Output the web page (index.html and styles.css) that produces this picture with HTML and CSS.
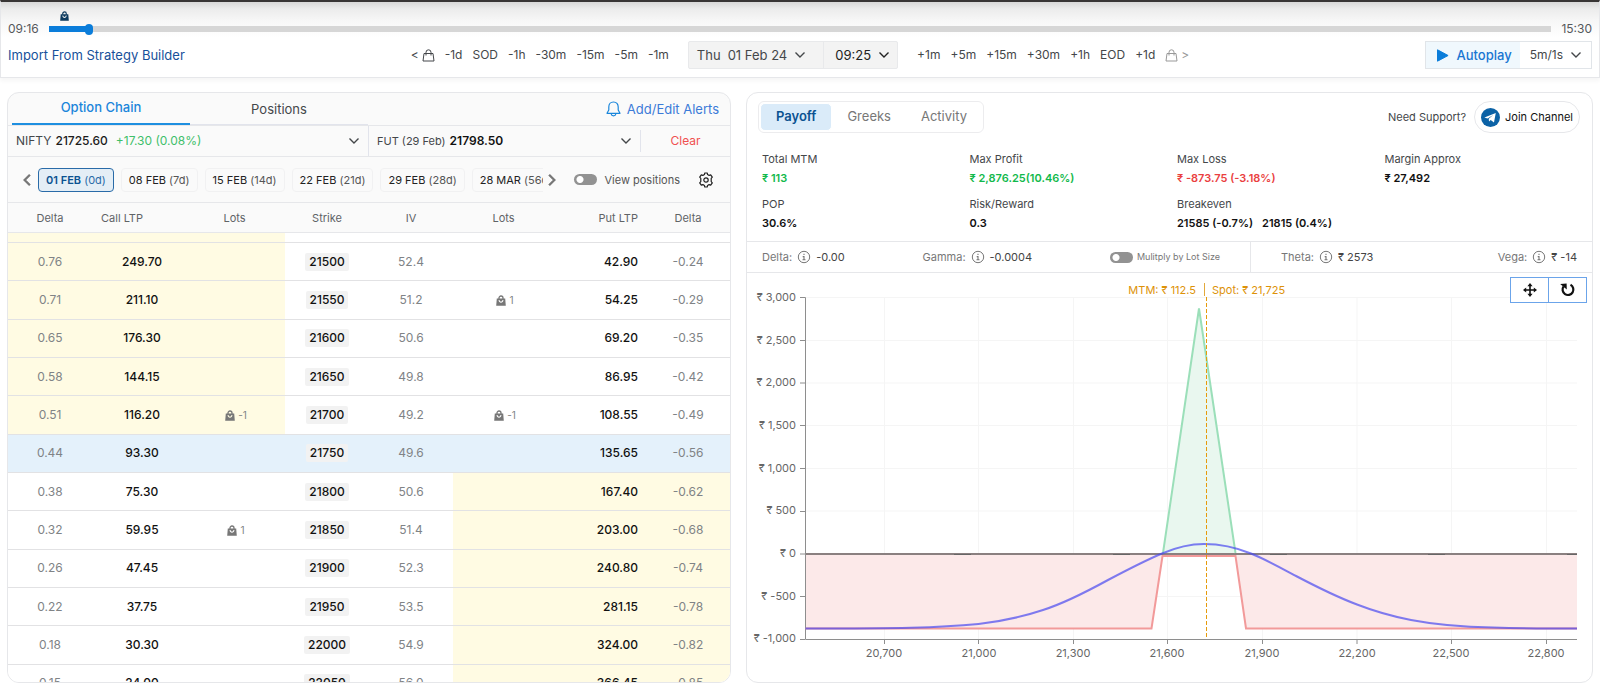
FILE: index.html
```html
<!DOCTYPE html>
<html lang="en">
<head>
<meta charset="utf-8">
<title>Option Simulator</title>
<link rel="stylesheet" href="styles.css">
</head>
<body>
<svg class="sprite" aria-hidden="true">
  <symbol id="bag" viewBox="0 0 10 11"><path d="M3 4V3a2 2 0 0 1 4 0v1" fill="none" stroke="currentColor" stroke-width="1.3"/><path fill-rule="evenodd" fill="currentColor" d="M.8 3.6h8.4l.6 7.2H.2zM2.6 5c0 3.6 4.8 3.6 4.8 0h-1c0 2-2.800 2-2.800 0z"/></symbol>
  <symbol id="bag-line" viewBox="0 0 13 13"><path d="M2 4.500h9l1 7.500H1zM4 6.500V3.300a2.500 2.500 0 0 1 5 0v3.200" fill="none" stroke="currentColor" stroke-linejoin="round"/></symbol>
  <symbol id="chevron" viewBox="0 0 12 12"><path d="M1.500 3.500 6 8l4.500-4.500" fill="none" stroke="currentColor" stroke-width="1.400"/></symbol>
  <symbol id="info" viewBox="0 0 14 14"><circle cx="7" cy="7" r="5.700" fill="none" stroke="currentColor"/><path d="M7 3.800v1.300M5.700 6.600H7v3M5.500 9.800h3" fill="none" stroke="currentColor" stroke-width="1.100"/></symbol>
</svg>

<header class="topbar">
  <div class="timeline">
    <span>09:16</span>
    <div class="timeline-track">
      <svg class="timeline-mark"><use href="#bag"/></svg>
      <input class="timeline-range" type="range" min="0" max="374" value="9" aria-label="Time of day">
    </div>
    <span>15:30</span>
  </div>
  <div class="controls">
    <a class="import" href="#">Import From Strategy Builder</a>
    <div class="stepper">
      <button class="step step-icon" aria-label="Previous trade">&lt;<svg class="bag-line"><use href="#bag-line"/></svg></button>
      <button class="step">-1d</button><button class="step">SOD</button><button class="step">-1h</button><button class="step">-30m</button><button class="step">-15m</button><button class="step">-5m</button><button class="step">-1m</button>
      <div class="datetime">
        <button class="pick pick-date"><span>Thu</span> 01 Feb 24<svg class="chev"><use href="#chevron"/></svg></button>
        <button class="pick pick-time">09:25<svg class="chev"><use href="#chevron"/></svg></button>
      </div>
      <button class="step">+1m</button><button class="step">+5m</button><button class="step">+15m</button><button class="step">+30m</button><button class="step">+1h</button><button class="step">EOD</button><button class="step">+1d</button>
      <button class="step step-icon step-off" aria-label="Next trade"><svg class="bag-line"><use href="#bag-line"/></svg>&gt;</button>
    </div>
    <div class="playback">
      <button class="autoplay"><svg class="play" viewBox="0 0 12 13"><path d="M1 .8 11.600 6.500 1 12.200z" fill="currentColor" stroke="currentColor" stroke-linejoin="round"/></svg>Autoplay</button>
      <button class="speed">5m/1s<svg class="chev"><use href="#chevron"/></svg></button>
    </div>
  </div>
</header>

<main class="panels">
  <section class="panel chain">
    <div class="chain-tabs">
      <button class="tab tab-on">Option Chain</button>
      <button class="tab">Positions</button>
      <a class="alerts" href="#"><svg class="bell" viewBox="0 0 15 16"><path d="M7.500 1c-3 0-4.700 2.200-4.700 5v3L1 12.300h13L12.200 9V6c0-2.800-1.700-5-4.700-5zM5.200 13c.3 2.600 4.300 2.600 4.600 0" fill="none" stroke="currentColor" stroke-width="1.200" stroke-linejoin="round"/></svg>Add/Edit Alerts</a>
    </div>
    <div class="quotes">
      <button class="quote quote-spot">NIFTY <b>21725.60</b> <span class="up">+17.30 (0.08%)</span><svg class="chev"><use href="#chevron"/></svg></button>
      <button class="quote quote-fut"><span>FUT (29 Feb)</span> <strong>21798.50</strong><svg class="chev"><use href="#chevron"/></svg></button>
      <button class="clear">Clear</button>
    </div>
    <div class="expiries">
      <button class="arrow" aria-label="Earlier expiries"><svg viewBox="0 0 10 12"><path d="M7.500 1.500 3 6l4.500 4.500" fill="none" stroke="currentColor" stroke-width="2"/></svg></button>
      <div class="chips">
        <button class="chip chip-on"><b>01 FEB</b> (0d)</button>
        <button class="chip"><b>08 FEB</b> (7d)</button>
        <button class="chip"><b>15 FEB</b> (14d)</button>
        <button class="chip"><b>22 FEB</b> (21d)</button>
        <button class="chip"><b>29 FEB</b> (28d)</button>
        <button class="chip"><b>28 MAR</b> (56d)</button>
      </div>
      <button class="arrow" aria-label="Later expiries"><svg viewBox="0 0 10 12"><path d="M2.500 1.500 7 6l-4.500 4.500" fill="none" stroke="currentColor" stroke-width="2"/></svg></button>
      <label class="switch"><input type="checkbox">View positions</label>
      <button class="gear" aria-label="Settings"><svg viewBox="0 0 16 16"><path d="M6.400 2.500 6.800 1h2.400l.4 1.500 1.500.9 1.600-.5 1.600 2.300-1.100 1.200v3.200l1.100 1.200-1.600 2.300-1.600-.5-1.500.9-.4 1.500H6.800l-.4-1.500-1.500-.9-1.600.5-1.600-2.300 1.100-1.200V6.400L1.700 5.200l1.600-2.300 1.600.5z" fill="none" stroke="currentColor" stroke-width="1.200" stroke-linejoin="round"/><circle cx="8" cy="8" r="2.200" fill="none" stroke="currentColor" stroke-width="1.200"/></svg></button>
    </div>
    <div class="strikes">
      <table class="strike-table">
        <colgroup><col class="w-delta"><col class="w-call"><col class="w-lots"><col class="w-mid"><col class="w-mid"><col class="w-lots"><col class="w-put"><col class="w-delta"></colgroup>
        <thead><tr><th>Delta</th><th class="call-head">Call LTP</th><th>Lots</th><th>Strike</th><th>IV</th><th>Lots</th><th class="put">Put LTP</th><th>Delta</th></tr></thead>
        <tbody>
          <tr class="itm-call peek"><td></td><td></td><td></td><td></td><td></td><td></td><td></td><td></td></tr>
          <tr class="itm-call"><td>0.76</td><td class="call">249.70</td><td></td><td><span class="strike">21500</span></td><td>52.4</td><td></td><td class="put">42.90</td><td>-0.24</td></tr>
          <tr class="itm-call"><td>0.71</td><td class="call">211.10</td><td></td><td><span class="strike">21550</span></td><td>51.2</td><td><span class="lots"><svg><use href="#bag"/></svg>1</span></td><td class="put">54.25</td><td>-0.29</td></tr>
          <tr class="itm-call"><td>0.65</td><td class="call">176.30</td><td></td><td><span class="strike">21600</span></td><td>50.6</td><td></td><td class="put">69.20</td><td>-0.35</td></tr>
          <tr class="itm-call"><td>0.58</td><td class="call">144.15</td><td></td><td><span class="strike">21650</span></td><td>49.8</td><td></td><td class="put">86.95</td><td>-0.42</td></tr>
          <tr class="itm-call"><td>0.51</td><td class="call">116.20</td><td><span class="lots"><svg><use href="#bag"/></svg>-1</span></td><td><span class="strike">21700</span></td><td>49.2</td><td><span class="lots"><svg><use href="#bag"/></svg>-1</span></td><td class="put">108.55</td><td>-0.49</td></tr>
          <tr class="atm"><td>0.44</td><td class="call">93.30</td><td></td><td><span class="strike">21750</span></td><td>49.6</td><td></td><td class="put">135.65</td><td>-0.56</td></tr>
          <tr class="itm-put"><td>0.38</td><td class="call">75.30</td><td></td><td><span class="strike">21800</span></td><td>50.6</td><td></td><td class="put">167.40</td><td>-0.62</td></tr>
          <tr class="itm-put"><td>0.32</td><td class="call">59.95</td><td><span class="lots"><svg><use href="#bag"/></svg>1</span></td><td><span class="strike">21850</span></td><td>51.4</td><td></td><td class="put">203.00</td><td>-0.68</td></tr>
          <tr class="itm-put"><td>0.26</td><td class="call">47.45</td><td></td><td><span class="strike">21900</span></td><td>52.3</td><td></td><td class="put">240.80</td><td>-0.74</td></tr>
          <tr class="itm-put"><td>0.22</td><td class="call">37.75</td><td></td><td><span class="strike">21950</span></td><td>53.5</td><td></td><td class="put">281.15</td><td>-0.78</td></tr>
          <tr class="itm-put"><td>0.18</td><td class="call">30.30</td><td></td><td><span class="strike">22000</span></td><td>54.9</td><td></td><td class="put">324.00</td><td>-0.82</td></tr>
          <tr class="itm-put"><td>0.15</td><td class="call">24.00</td><td></td><td><span class="strike">22050</span></td><td>56.0</td><td></td><td class="put">366.45</td><td>-0.85</td></tr>
        </tbody>
      </table>
    </div>
  </section>

  <section class="panel payoff">
    <div class="payoff-head">
      <div class="segments"><button class="segment segment-on">Payoff</button><button class="segment">Greeks</button><button class="segment">Activity</button></div>
      <div class="support">Need Support?
        <a class="join" href="#"><svg class="telegram" viewBox="0 0 18 18"><circle cx="9" cy="9" r="9" fill="#0b62a6"/><path d="M3.200 8.900 14 4.700 12.300 13.700 9.200 11.400 7.600 12.900 7.300 10.200 11.600 6.600 6.200 9.900z" fill="#fff"/></svg>Join Channel</a>
      </div>
    </div>
    <dl class="metrics">
      <div><dt>Total MTM</dt><dd class="gain">₹ 113</dd></div>
      <div><dt>Max Profit</dt><dd class="gain">₹ 2,876.25(10.46%)</dd></div>
      <div><dt>Max Loss</dt><dd class="loss">₹ -873.75 (-3.18%)</dd></div>
      <div><dt>Margin Approx</dt><dd>₹ 27,492</dd></div>
      <div><dt>POP</dt><dd>30.6%</dd></div>
      <div><dt>Risk/Reward</dt><dd>0.3</dd></div>
      <div><dt>Breakeven</dt><dd class="pair"><span>21585 (-0.7%)</span><span>21815 (0.4%)</span></dd></div>
    </dl>
    <div class="greeks">
      <div class="greeks-unit">
        <span class="greek">Delta: <svg class="info"><use href="#info"/></svg><span>-0.00</span></span>
        <span class="greek">Gamma: <svg class="info"><use href="#info"/></svg><span>-0.0004</span></span>
        <label class="switch switch-small"><input type="checkbox">Mulitply by Lot Size</label>
      </div>
      <div class="greeks-total">
        <span class="greek">Theta: <svg class="info"><use href="#info"/></svg><span>₹ 2573</span></span>
        <span class="greek">Vega: <svg class="info"><use href="#info"/></svg><span>₹ -14</span></span>
      </div>
    </div>
    <div class="chart">
      <svg class="plot" viewBox="0 0 845 402" role="img" aria-label="Payoff at expiry and today">
        <path class="grid" d="M58.500 24.500H830M58.500 67.500H830M58.500 110H830M58.500 152.500H830M58.500 195.500H830M58.500 238H830M58.500 323.500H830M137.500 24.500V366M231.500 24.500V366M326.500 24.500V366M420.500 24.500V366M515.500 24.500V366M610 24.500V366M704.500 24.500V366M799.500 24.500V366"/>
        <path class="loss-area" d="M58.500 281H415.500L404.500 355.500H58.500zM830 281H488.500L499 355.500H830z"/>
        <path class="gain-area" d="M416 281 452 35.500 488.500 281z"/>
        <path class="zero" d="M58.500 281H830"/>
        <path class="zero-marks" d="M207 281.500h17M366 281.500h17M523 281.500h17M681 281.500h17M820 281.500h10"/>
        <path class="axis" d="M53 24.500h5.500V366.500M58.500 366.500H830"/>
        <path class="ticks" d="M53 67.500h5M53 110h5M53 152.500h5M53 195.500h5M53 238.500h5M53 281h5M53 323.500h5M53 366.500h5M137.500 367v4M231.500 367v4M326.500 367v4M420.500 367v4M515.500 367v4M610 367v4M704.500 367v4M799.500 367v4"/>
        <path class="loss-line" d="M58.500 355.500H404.500L415.500 283H488.500L499 355.500H830"/>
        <path class="gain-line" d="M416 280 452 35.500 488.500 280"/>
        <path class="today" d="M58.500 355.500C150 355.500 190 355 231.500 351C253 348.500 275 344 296 337C318 330 340 318.500 361 307C379 297.500 397 288 415 280.500C429 274.500 443 271 457 271C472 271 488 274 504 280.500C520 287 535 295.500 550 303.500C570 314 590 324 610 331.500C628 338.500 646 343.500 664 347C690 352 718 354 746 354.500C774 355.300 802 355.500 830 355.500"/>
        <path class="spot" d="M459.500 24V366"/>
        <path class="divider" d="M457.500 10v13"/>
        <g class="y-labels">
          <text x="49" y="28">₹ 3,000</text><text x="49" y="71">₹ 2,500</text><text x="49" y="113">₹ 2,000</text><text x="49" y="156">₹ 1,500</text><text x="49" y="199">₹ 1,000</text><text x="49" y="241">₹ 500</text><text x="49" y="284">₹ 0</text><text x="49" y="327">₹ -500</text><text x="49" y="369">₹ -1,000</text>
        </g>
        <g class="x-labels">
          <text x="137" y="384">20,700</text><text x="232" y="384">21,000</text><text x="326" y="384">21,300</text><text x="420" y="384">21,600</text><text x="515" y="384">21,900</text><text x="610" y="384">22,200</text><text x="704" y="384">22,500</text><text x="799" y="384">22,800</text>
        </g>
        <text class="note note-left" x="449" y="21">MTM: ₹ 112.5</text>
        <text class="note" x="465" y="21">Spot: ₹ 21,725</text>
      </svg>
      <div class="tools">
        <button aria-label="Pan"><svg viewBox="0 0 14 14"><path d="M7 2v10M2 7h10" fill="none" stroke="currentColor" stroke-width="1.600"/><path d="M7 0 9.600 3.200H4.400zM7 14 4.400 10.800h5.200zM0 7l3.200-2.600v5.200zM14 7l-3.200 2.600V4.400z" fill="currentColor"/></svg></button>
        <button aria-label="Reset"><svg viewBox="0 0 16 14"><path d="M10.500 1.800A5.400 5.400 0 1 1 3.600 3.400" fill="none" stroke="currentColor" stroke-width="2.200"/><path d="M.2 1 6.600.4 6.800 6.400z" fill="currentColor"/></svg></button>
      </div>
    </div>
  </section>
</main>
</body>
</html>
```

FILE: styles.css
```css
* { box-sizing: border-box; }

body {
  margin: 0;
  min-height: 100vh;
  display: flex;
  flex-direction: column;
  background: #fff;
  color: #44474a;
  font: 13px/16px Inter, "Noto Sans", sans-serif;
}

button {
  font: inherit;
  color: inherit;
  background: none;
  border: 0;
  padding: 0;
  cursor: pointer;
}

a { color: inherit; text-decoration: none; }
svg { display: block; flex: none; }
.sprite { position: absolute; width: 0; height: 0; }
.chev { width: 12px; height: 12px; }

/* Top bar */
.topbar {
  border: 1px solid #e6e7ea;
  border-top: 2px solid #383535;
  padding: 19px 7px 8px;
  background: linear-gradient(#d8d8d8, #ececec 7px, #f7f7f7 19px, #fff 36px);
  box-shadow: 0 3px 4px #0000000a;
}

.timeline {
  display: flex;
  align-items: center;
  gap: 10px;
  height: 16px;
  font-size: 12px;
  color: #55585b;
}

.timeline-track { position: relative; flex: 1; display: flex; }
.timeline-mark {
  position: absolute;
  left: 11px;
  bottom: 14px;
  width: 9px;
  height: 10px;
  color: #0c3a5e;
}

.timeline-range {
  appearance: none;
  width: 100%;
  height: 12px;
  margin: 0;
  background: linear-gradient(90deg, #0b7dda 38px, #d6d6d6 38px) center / 100% 6px no-repeat;
  border-radius: 3px;
}
.timeline-range::-webkit-slider-thumb {
  appearance: none;
  width: 8px;
  height: 11px;
  border-radius: 4px;
  background: #0b7dda;
}

.controls {
  display: grid;
  grid-template-columns: 1fr auto 1fr;
  align-items: center;
  margin-top: 4px;
}

.import { color: #17519a; }

.stepper { display: flex; align-items: center; gap: 10px; font-size: 12px; }
.step-icon { display: flex; align-items: center; gap: 3px; }
.step-off { color: #999; }
.bag-line { width: 13px; height: 13px; }

.datetime {
  display: flex;
  margin: 0 9px;
  border: 1px solid #e8e9eb;
  border-radius: 2px;
  background: #f3f3f3;
  font-size: 13px;
}
.pick { display: flex; align-items: center; height: 26px; }
.pick-date { gap: 7px; padding: 0 17px 0 8px; }
.pick-time { gap: 7px; padding: 0 7px 0 11px; border-left: 1px solid #e8e9eb; color: #222; }

.playback {
  justify-self: end;
  display: flex;
  height: 28px;
  border: 1px solid #e1e5e9;
}
.autoplay {
  display: flex;
  align-items: center;
  gap: 7px;
  padding: 0 8px 0 10px;
  background: #f0f8fd;
  color: #1976d2;
  font-size: 13px;
  font-weight: 500;
}
.play { width: 13px; height: 13px; color: #0b7dda; }
.speed { display: flex; align-items: center; gap: 7px; padding: 0 9px 0 10px; font-size: 12px; }

/* Panels */
.panels {
  flex: 1;
  display: grid;
  grid-template-columns: 724fr 847fr;
  gap: 15px;
  padding: 14px 7px 7px;
}

.panel {
  display: flex;
  flex-direction: column;
  min-width: 0;
  border: 1px solid #e6e7ea;
  border-radius: 12px;
  overflow: hidden;
}

/* Option chain */
.chain { background: #fafafa; }

.chain-tabs {
  display: flex;
  height: 33px;
  padding: 0 11px 0 4px;
  border-bottom: 1px solid #e6e7ea;
}
.tab { flex: 0 0 178px; border-bottom: 1px solid #e2e4ec; }
.tab-on { padding-bottom: 2px; color: #1a86db; font-weight: 500; border-bottom: 2px solid #1e8fe0; }
.alerts { display: flex; align-items: center; gap: 6px; margin-left: auto; color: #3c7bd8; }
.bell { width: 15px; height: 16px; color: #1a86db; }

.quotes {
  display: grid;
  grid-template-columns: 361fr 271fr 90fr;
  border-bottom: 1px solid #e6e7ea;
  font-size: 12px;
}
.quote { display: flex; align-items: center; gap: 4px; height: 30px; padding: 0 8px; }
.quote .chev { margin-left: auto; }
.quote b { font-weight: 500; color: #1c1c1c; }
.quote strong { font-weight: 600; color: #111; }
.quote .up { margin-left: 4px; color: #3fbf6b; }
.quote-spot { border-right: 1px solid #e2e4ec; }
.quote-fut span { font-size: 11px; }
.clear { margin: 4px 0; border-left: 1px solid #e2e4ec; color: #f05050; }

.expiries { display: flex; align-items: center; height: 45px; padding: 0 16px 0 13px; font-size: 11px; }
.arrow { color: #777; }
.arrow svg { width: 12px; height: 14px; }
.chips { display: flex; gap: 7px; flex: 1; min-width: 0; overflow: hidden; margin: 0 3px 0 5px; }
.chip {
  flex: none;
  height: 24px;
  padding: 0 7px;
  border: 1px solid #f1f1f2;
  border-radius: 4px;
  color: #555;
}
.chip b { font-weight: 400; color: #222; }
.chip-on { background: #e4eef6; border-color: #2a6ba8; color: #2a6ba8; }
.chip-on b { font-weight: 600; color: #0b5291; }

.switch { display: flex; align-items: center; gap: 7px; margin: 0 18px 0 16px; color: #555; }
.switch input {
  appearance: none;
  width: 23px;
  height: 11px;
  margin: 0;
  border-radius: 6px;
  background: radial-gradient(circle at 6px 50%, #fff 3px, #929292 4px);
}
.gear { color: #222; }
.gear svg { width: 16px; height: 16px; }

.strikes { flex: 1 1 0; overflow: hidden; background: #fff; }
.strike-table {
  width: 100%;
  height: 501px;
  table-layout: fixed;
  border-collapse: separate;
  border-spacing: 0;
  font-size: 12px;
  color: #808386;
}
.w-delta { width: 84px; }
.w-call { width: 92px; }
.w-lots { width: 101px; }
.w-mid { width: 84px; }
.w-put { width: 92px; }
.strike-table th {
  height: 31px;
  padding: 0;
  border-top: 1px solid #e6e7ea;
  border-bottom: 1px solid #e6e7ea;
  background: #fafafa;
  color: #606366;
  font-size: 11px;
  font-weight: 400;
}
.strike-table td { height: 38px; padding: 0; border-bottom: 1px solid #e2e2e4; text-align: center; }
.strike-table .peek td { height: 10px; }
.strike-table .call-head { padding-right: 32px; }
.strike-table .call { padding-left: 8px; font-weight: 500; color: #111; }
.strike-table .put { padding-right: 8px; text-align: right; }
.strike-table td.put { font-weight: 500; color: #111; }
.strike {
  display: inline-block;
  padding: 1px 4px;
  border-radius: 2px;
  background: #f2f2f2;
  color: #111;
  font-weight: 500;
}
.itm-call td:nth-child(-n+3), .itm-put td:nth-child(n+6) { background: #fffbe3; }
.atm td { background: #e4f1fb; }
.lots { display: inline-flex; gap: 3px; padding-left: 3px; font-size: 10px; line-height: 10px; vertical-align: middle; }
.lots svg { width: 10px; height: 11px; color: #777; }

/* Payoff */
.payoff-head { display: flex; justify-content: space-between; align-items: center; padding: 8px 12px 0 11px; }
.segments { display: flex; padding: 1px; border: 1px solid #ececee; border-radius: 6px; }
.segment { height: 28px; padding: 0 14px 2px; border-radius: 5px; color: #777; border: 1px solid #fff; }
.segment-on { padding: 0 15px 2px; background: #daebf9; color: #0b5291; font-weight: 600; }
.support { display: flex; align-items: center; gap: 8px; font-size: 11px; }
.join {
  display: flex;
  align-items: center;
  gap: 5px;
  height: 32px;
  padding: 0 6px;
  border: 1px solid #e6e7ea;
  border-radius: 16px;
  color: #111;
}
.telegram { width: 19px; height: 19px; }

.metrics {
  display: grid;
  grid-template-columns: repeat(4, 1fr);
  row-gap: 7px;
  margin: 0;
  padding: 16px 0 9px 15px;
  font-size: 11px;
}
.metrics dt { line-height: 20px; }
.metrics dd { margin: 0; line-height: 18px; font-weight: 600; color: #111; }
.metrics .gain { color: #12b94b; }
.metrics .loss { color: #ea3f3f; }
.pair { display: flex; gap: 9px; }

.greeks {
  display: grid;
  grid-template-columns: 504fr 341fr;
  border-top: 1px solid #e6e7ea;
  border-bottom: 1px solid #e6e7ea;
  height: 32px;
  font-size: 11px;
}
.greeks-unit, .greeks-total { display: flex; align-items: center; justify-content: space-between; }
.greeks-unit { padding: 0 30px 0 15px; border-right: 1px solid #e6e7ea; }
.greeks-total { padding: 0 15px 0 30px; }
.greek { display: flex; align-items: center; gap: 5px; color: #777; }
.greek span { color: #444; }
.info { width: 14px; height: 14px; color: #777; }
.switch-small { gap: 4px; margin: 0; font-size: 9px; color: #777; }

.chart { position: relative; flex: 1; }
.plot { width: 100%; height: auto; }
.plot path { fill: none; }
.plot .grid { stroke: #f5f5f5; }
.plot .loss-area { fill: #fce9e9; }
.plot .gain-area { fill: #e9f7ef; }
.plot .zero { stroke: #8a8080; stroke-width: 2; }
.plot .zero-marks { stroke: #666; }
.plot .axis, .plot .ticks { stroke: #8e8e8e; }
.plot .loss-line { stroke: #f29a9a; stroke-width: 2; }
.plot .gain-line { stroke: #9bdfb9; stroke-width: 2; }
.plot .today { stroke: #4848f0; stroke-opacity: .7; stroke-width: 2; }
.plot .spot { stroke: #e69b0c; stroke-dasharray: 4 2; stroke-width: 1; }
.plot .divider { stroke: #e3a93c; }
.plot text { font-size: 11px; fill: #666; }
.y-labels { text-anchor: end; }
.x-labels { text-anchor: middle; }
.plot .note { fill: #dd9208; }
.note-left { text-anchor: end; }

.tools { position: absolute; top: 4px; right: 5px; display: flex; border: 1px solid #6ba4ea; background: #fff; }
.tools button { width: 37px; height: 24px; display: grid; place-items: center; color: #111; }
.tools button + button { width: 38px; border-left: 1px solid #6ba4ea; }
.tools svg { width: 16px; height: 14px; }
```
